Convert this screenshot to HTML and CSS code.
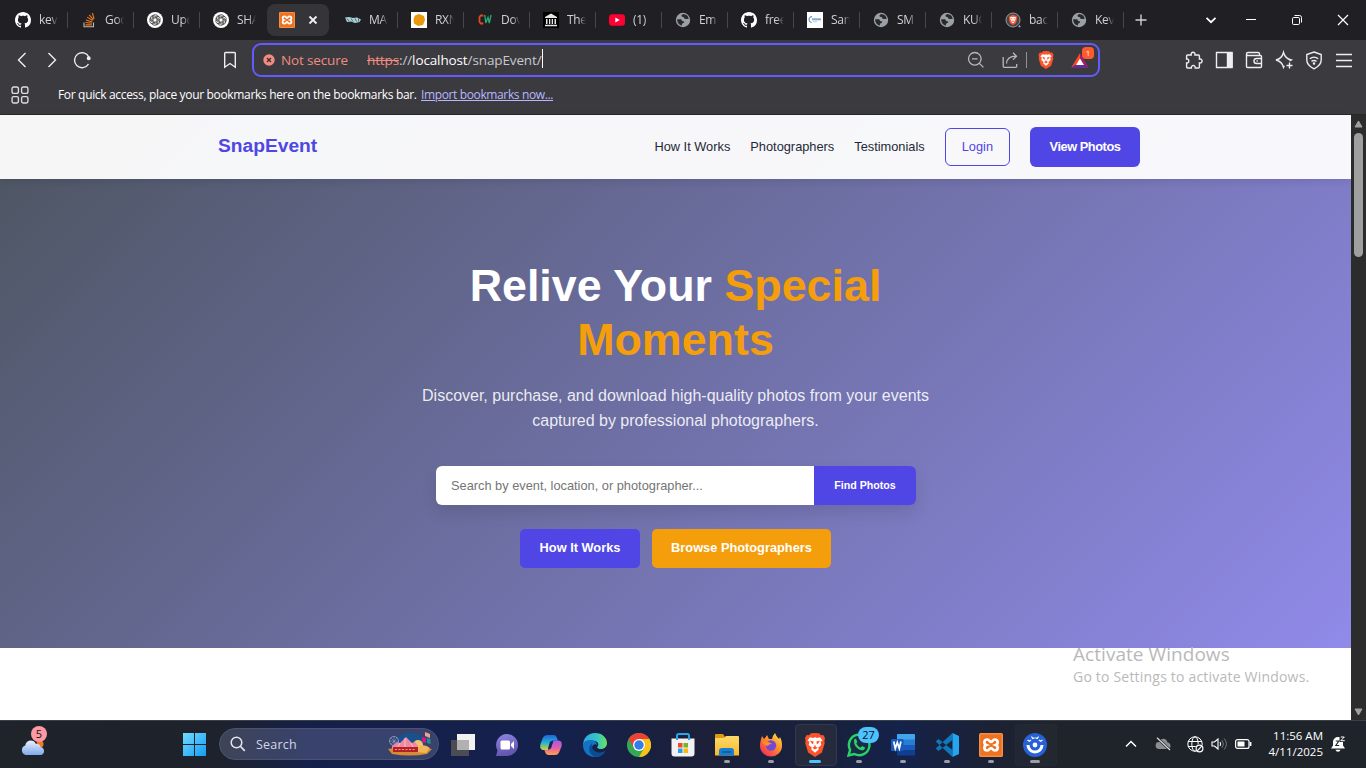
FILE: index.html
```
<!DOCTYPE html>
<html lang="en">
<head>
<meta charset="utf-8">
<title>SnapEvent</title>
<link rel="stylesheet" href="styles.css">
</head>
<body>
<svg class="defs" width="0" height="0">
  <defs>
    <symbol id="github" viewBox="0 0 16 16"><path fill="#fff" d="M8 0C3.58 0 0 3.58 0 8c0 3.54 2.29 6.53 5.47 7.59.4.07.55-.17.55-.38 0-.19-.01-.82-.01-1.49-2.01.37-2.53-.49-2.69-.94-.09-.23-.48-.94-.82-1.13-.28-.15-.68-.52-.01-.53.63-.01 1.08.58 1.23.82.72 1.21 1.87.87 2.33.66.07-.52.28-.87.51-1.07-1.78-.2-3.64-.89-3.64-3.95 0-.87.31-1.59.82-2.15-.08-.2-.36-1.02.08-2.12 0 0 .67-.21 2.2.82.64-.18 1.32-.27 2-.27s1.36.09 2 .27c1.53-1.04 2.2-.82 2.2-.82.44 1.1.16 1.92.08 2.12.51.56.82 1.27.82 2.15 0 3.07-1.87 3.75-3.65 3.95.29.25.54.73.54 1.48 0 1.07-.01 1.93-.01 2.2 0 .21.15.46.55.38A8.01 8.01 0 0 0 16 8c0-4.42-3.58-8-8-8z"/></symbol>
    <symbol id="stack" viewBox="0 0 16 16"><path d="M3 10.500v4.300h9.500v-4.300" fill="none" stroke="#bcbbbb" stroke-width="1.100"/><path d="M4.500 12.900h6.300M4.500 10.500l6.400.8M5 7.900l6.200 2M6.200 5.100l5.500 3.400M8.200 2.800l4.200 4.800M11.400 1l1.700 5.800" stroke="#f47a1c" stroke-width="1.100" fill="none"/></symbol>
    <symbol id="gpt" viewBox="0 0 16 16"><circle cx="8" cy="8" r="8" fill="#fff"/><g fill="none" stroke="#222" stroke-width=".65"><path id="lobe" d="M6.100 8.800V5a2.400 2.400 0 0 1 4.500-1.100M6.100 5.700L9 4.100a2.300 2.300 0 0 1 3.200 1"/><use href="#lobe" transform="rotate(60 8 8)"/><use href="#lobe" transform="rotate(120 8 8)"/><use href="#lobe" transform="rotate(180 8 8)"/><use href="#lobe" transform="rotate(240 8 8)"/><use href="#lobe" transform="rotate(300 8 8)"/></g></symbol>
    <symbol id="xampp" viewBox="0 0 24 24"><rect width="24" height="24" rx="1.500" fill="#ee7220"/><rect x=".8" y=".8" width="22.400" height="22.400" rx="1" fill="none" stroke="#f9a866" stroke-width=".8"/><path d="M8.200 6.500C4.600 6.500 4.600 11 7.200 12c-2.600 1-2.600 5.500 1 5.500 2.500 0 2.200-2.500 3.800-2.500s1.300 2.500 3.800 2.500c3.600 0 3.600-4.500 1-5.500 2.600-1 2.600-5.500-1-5.500-2.500 0-2.200 2.500-3.800 2.500s-1.300-2.500-3.800-2.500z" fill="none" stroke="#fff" stroke-width="2.700"/></symbol>
    <symbol id="hands" viewBox="0 0 16 16"><path d="M0 5.500l4-.5 4 1 4-.5 4 2-1.500 2.500-4.500 1-4-1.500-4 .5z" fill="#a9d1dc"/><path d="M2 6.500l2 2.500M6 6.500l2 3M10 6.500l1.500 3M13.500 6.500v3" stroke="#4b5b66" stroke-width=".9"/></symbol>
    <symbol id="hexa" viewBox="0 0 16 16"><path d="M0 0h16v16H0z" fill="#fff"/><path d="M8 2l5 2 1 4-2 5-5 1-4-2.500L2.500 7 4 3.500z" fill="#e8980f"/></symbol>
    <symbol id="cw" viewBox="0 0 16 16"><path d="M6.300 3.500H3.800L2.500 5v5l1.300 1.500h2.500" fill="none" stroke="#e8441f" stroke-width="1.800"/><path d="M7.800 3l1 8L11 5.500l1.300 5.500L14 3" fill="none" stroke="#2bab75" stroke-width="1.300"/></symbol>
    <symbol id="museum" viewBox="0 0 16 16"><path d="M0 0h16v16H0z" fill="#000"/><path d="M2 5l6-3.500L14 5v1H2zM3 7h1.500v5H3zM6 7h1.300v5H6zM8.700 7H10v5H8.700zM11.500 7H13v5h-1.500zM2 12.700h12v1.600H2z" fill="#e7e7e7"/></symbol>
    <symbol id="youtube" viewBox="0 0 16 16"><rect y="2.300" width="16" height="11.500" rx="3" fill="#ff0033"/><path d="M6.300 5.500v5L10.700 8z" fill="#fff"/></symbol>
    <symbol id="globe" viewBox="0 0 16 16"><circle cx="8" cy="8" r="7.200" fill="#9aa0a6"/><path d="M2.200 7.200h3.100c2 0 1 2 3 2.100 1.400.1 1 1.900-.4 1.900-1 0-.9 1.300-.9 2.400-2.900-.6-5-3-4.800-6.400zM8.200 2.100c-1 1-2 .6-1.600 2.100.3 1.200 2.600.3 2.700 1.700.1 1.200 1.400 1.300 2.400 1.100l2-.3C13.300 4 11.100 2.200 8.200 2.100z" fill="#29292e"/></symbol>
    <symbol id="san" viewBox="0 0 16 16"><path d="M0 0h16v16H0z" fill="#fff"/><path d="M5 4.800C1.500 4 1 10 4.600 10.600" fill="none" stroke="#3c6da8"/><path d="M5 7.300h9" stroke="#83a9ce" stroke-width="2"/><path d="M6 9.700h4" stroke="#bdd0e2"/></symbol>
    <symbol id="brave" viewBox="0 0 24 24"><path d="M12 0l4 .2 2 2 2.300-.2L22 5l-.6 3 .3 2.200-2.800 9.300L12 24l-6.900-4.500L2.300 10.200 2.600 8 2 5l1.700-3L6 2.200l2-2z" fill="#fb542b"/><path d="M12 4.300l-2 .6-3-.7-2.500 3.200 2 1.300-.8 3.300 3 2.500-.4 2L12 19.800l3.700-3.300-.4-2 3-2.500-.8-3.300 2-1.300L17 4.200l-3 .7z" fill="#fff"/><path d="M7 7.500l3.500 1-.3 3-1.600-1.200zM17 7.500l-3.500 1 .3 3 1.600-1.200zM12 11.200l.8 2.600 1.900 1-2.700 1.800-2.700-1.800 1.900-1z" fill="#fb542b"/></symbol>
    <linearGradient id="gWin" x2="1" y2="1"><stop stop-color="#72dbff"/><stop offset="1" stop-color="#139cf4"/></linearGradient>
    <linearGradient id="gCloud" x2="0" y2="1"><stop stop-color="#e9f1ff"/><stop offset="1" stop-color="#7fa8ec"/></linearGradient>
    <linearGradient id="gChat" x2="0.300" y2="1"><stop stop-color="#8f86e3"/><stop offset="1" stop-color="#6355ae"/></linearGradient>
    <linearGradient id="gCoA" x2="0" y2="1"><stop stop-color="#1e63e0"/><stop offset=".5" stop-color="#21b3d4"/><stop offset="1" stop-color="#d9cf35"/></linearGradient>
    <linearGradient id="gCoB" x2="0" y2="1"><stop stop-color="#9c5cf0"/><stop offset=".5" stop-color="#e75da5"/><stop offset="1" stop-color="#ff9f50"/></linearGradient>
    <linearGradient id="gEdge" x2="1"><stop stop-color="#2ba7e8"/><stop offset=".6" stop-color="#36c7c4"/><stop offset="1" stop-color="#6fe05b"/></linearGradient>
    <linearGradient id="gFold" x2="0" y2="1"><stop stop-color="#ffd96b"/><stop offset="1" stop-color="#f5b92b"/></linearGradient>
    <linearGradient id="gFox" x1="1" y1="0" x2=".2" y2="1"><stop stop-color="#ffe94c"/><stop offset=".5" stop-color="#ff8a2a"/><stop offset="1" stop-color="#f02a5d"/></linearGradient>
  </defs>
</svg>

<header class="tabs">
  <div class="tab"><svg><use href="#github"/></svg><span>kev</span></div>
  <div class="tab"><svg><use href="#stack"/></svg><span>Goo</span></div>
  <div class="tab"><svg><use href="#gpt"/></svg><span>Upd</span></div>
  <div class="tab last"><svg><use href="#gpt"/></svg><span>SHA</span></div>
  <div class="tab active"><svg><use href="#xampp"/></svg><svg class="close" viewBox="0 0 10 10"><path d="M1.500 1.500l7 7m0-7l-7 7" stroke="#f1f1f3" stroke-width="1.800"/></svg></div>
  <div class="tab"><svg><use href="#hands"/></svg><span>MA</span></div>
  <div class="tab"><svg><use href="#hexa"/></svg><span>RXN</span></div>
  <div class="tab"><svg><use href="#cw"/></svg><span>Dov</span></div>
  <div class="tab"><svg><use href="#museum"/></svg><span>The</span></div>
  <div class="tab"><svg><use href="#youtube"/></svg><span>(1)</span></div>
  <div class="tab"><svg><use href="#globe"/></svg><span>Em</span></div>
  <div class="tab"><svg><use href="#github"/></svg><span>free</span></div>
  <div class="tab"><svg><use href="#san"/></svg><span>San</span></div>
  <div class="tab"><svg><use href="#globe"/></svg><span>SM</span></div>
  <div class="tab"><svg><use href="#globe"/></svg><span>KUC</span></div>
  <div class="tab"><svg viewBox="0 0 16 16"><circle cx="8" cy="8" r="7" fill="#46464b" stroke="#97989c"/><use href="#brave" x="3" y="3" width="10" height="10"/><circle cx="14.500" cy="14.300" r="1.500" fill="#a7a7ab" stroke="#202024"/></svg><span>bac</span></div>
  <div class="tab"><svg><use href="#globe"/></svg><span>Kev</span></div>
  <svg class="plus" viewBox="0 0 12 12"><path d="M6 .5v11M.5 6h11" stroke="#d0d0d3" stroke-width="1.400"/></svg>
  <div class="winctl">
    <svg viewBox="0 0 12 12"><path d="M1.500 3.800L6 8.200l4.500-4.400" fill="none" stroke="#fff" stroke-width="1.700"/></svg>
    <svg viewBox="0 0 12 12"><path d="M1 5.500h10" stroke="#fff"/></svg>
    <svg viewBox="0 0 12 12"><rect x="1.500" y="3.500" width="7" height="7" rx="1.200" fill="none" stroke="#fff"/><path d="M3.500 1.500h5.200a2 2 0 0 1 1.800 2v5" fill="none" stroke="#fff"/></svg>
    <svg viewBox="0 0 12 12"><path d="M1 1l10 10M11 1L1 11" stroke="#fff" stroke-width="1.200"/></svg>
  </div>
</header>

<div class="toolbar">
  <svg viewBox="0 0 30 30"><path d="M18.500 8L11.500 15l7 7"/></svg>
  <svg viewBox="0 0 30 30"><path d="M11.500 8l7 7-7 7"/></svg>
  <svg viewBox="0 0 30 30"><path d="M21.500 19A7.500 7.500 0 1 1 21.800 12"/><circle cx="21.700" cy="13.200" r="1.300" fill="#eee"/></svg>
  <svg class="mark" viewBox="0 0 30 30"><path d="M10.500 7.500h9a.8.800 0 0 1 .8.800V22.200L15 18.500l-5.300 3.700V8.300a.8.800 0 0 1 .8-.8z"/></svg>
  <div class="url">
    <svg class="warn" viewBox="0 0 12 12"><circle cx="6" cy="6" r="5.700" fill="#f28b82"/><path d="M4 4l4 4m0-4L4 8" stroke="#3a2b2e" stroke-width="1.300"/></svg>
    <span class="insecure">Not secure</span>
    <span class="address"><s>https</s>://<b>localhost</b>/snapEvent/</span><i class="caret"></i>
    <div class="urlicons">
      <svg class="zoomout" viewBox="0 0 18 18"><circle cx="7.800" cy="7.800" r="6.300"/><path d="M12.400 12.400l4 4M5 7.800h5.600"/></svg>
      <svg class="share" viewBox="0 0 18 18"><path d="M2.200 6v9.300a1 1 0 0 0 1 1h11.500a1 1 0 0 0 1-1V13M5.500 12.500c.3-4.500 3-7.300 9.500-7.300M12 1.800l3.500 3.400L12 8.600"/></svg>
      <i class="rule"></i>
      <svg class="shield"><use href="#brave"/></svg>
      <span class="bat"><svg viewBox="0 0 18 15"><path d="M9 0L0 15l9-6z" fill="#ff4724"/><path d="M9 0l9 15-9-6z" fill="#9e1f63"/><path d="M0 15h18L9 9z" fill="#662d91"/><path d="M9 5.500l4 6.500H5z" fill="#fff"/></svg><em>1</em></span>
    </div>
  </div>
  <div class="tools">
    <svg viewBox="0 0 30 30"><path d="M8.500 10h3.700c-.9-3.600 4.600-3.600 3.800 0h3.500a.9.900 0 0 1 .9.900v3.200c3.600-.8 3.600 4.600 0 3.800v4.200a.9.900 0 0 1-.9.900h-3.300c.6-3.300-4.400-3.300-3.800 0H8.500a.9.900 0 0 1-.9-.9v-4.200c3 .6 3-4.400 0-3.800v-3.200a.9.900 0 0 1 .9-.9z"/></svg>
    <svg viewBox="0 0 30 30"><path d="M7.500 7.500h15.500v15h-15.500z"/><path d="M18.500 8h4.500v14h-4.500z" fill="#eee"/></svg>
    <svg viewBox="0 0 30 30"><path d="M20.500 10.500V9a1.500 1.500 0 0 0-1.500-1.500H9a1.500 1.500 0 0 0 0 3h12.500a1 1 0 0 1 1 1v10a1 1 0 0 1-1 1H8.500a1 1 0 0 1-1-1V9M22.500 13.500h-5a2.200 2.200 0 0 0 0 5h5M17.500 16h1.300"/></svg>
    <svg viewBox="0 0 30 30"><path d="M20.500 15.800l1.700-.8q-6-1.500-7.700-7.500-1.500 6-7.500 7.500 6 1.500 7.500 7.300l.8-1.600M20.500 17.500v6M17.500 20.500h6"/></svg>
    <svg viewBox="0 0 30 30"><path d="M15 7l7.200 2.600v5.400c0 4.500-3.500 7-7.200 8.800-3.700-1.800-7.200-4.300-7.200-8.800V9.600zM10.800 13.800c2.500-2 5.900-2 8.400 0M12.500 16.400c1.500-1.100 3.500-1.100 5 0"/><circle cx="15" cy="18.500" r=".6"/></svg>
    <svg viewBox="0 0 30 30"><path d="M7 9.500h16M7 15.500h16M7 21.500h16"/></svg>
  </div>
</div>

<div class="bookmarks">
  <svg viewBox="0 0 17 17"><rect x="1" y="1" width="6" height="6" rx="1.500"/><rect x="10" y="1" width="6" height="6" rx="1.500"/><rect x="1" y="10" width="6" height="6" rx="1.500"/><rect x="10" y="10" width="6" height="6" rx="1.500"/></svg>
  <span class="hint">For quick access, place your bookmarks here on the bookmarks bar.</span>
  <a>Import bookmarks now...</a>
</div>

<main class="viewport">
  <div class="page">
    <section class="hero">
      <nav class="nav">
        <div class="brand">SnapEvent</div>
        <div class="links">
          <a>How It Works</a><a>Photographers</a><a>Testimonials</a>
          <a class="login">Login</a><a class="view">View Photos</a>
        </div>
      </nav>
      <h1>Relive Your <span>Special Moments</span></h1>
      <p>Discover, purchase, and download high-quality photos from your events captured by professional photographers.</p>
      <form class="search"><input type="text" placeholder="Search by event, location, or photographer..."><button type="button">Find Photos</button></form>
      <div class="cta"><a>How It Works</a><a class="amber">Browse Photographers</a></div>
    </section>
  </div>
  <div class="scrollbar">
    <svg viewBox="0 0 9 8"><path d="M4.500 1L8 7H1z" fill="#9f9f9f" stroke="#9f9f9f" stroke-linejoin="round"/></svg>
    <i class="thumb"></i>
    <svg class="down" viewBox="0 0 9 8"><path d="M4.500 7L8 1H1z" fill="#9f9f9f" stroke="#9f9f9f" stroke-linejoin="round"/></svg>
  </div>
  <div class="watermark"><div class="w1">Activate Windows</div><div class="w2">Go to Settings to activate Windows.</div></div>
</main>

<footer class="taskbar">
  <div class="weather"><svg viewBox="0 0 25 22"><circle cx="20" cy="9" r="3.500" fill="#f47b1c"/><path d="M5.500 20a5 5 0 0 1-.3-9.500C6 5 13.500 3.500 16 9c3.500-.5 4.500 1.500 4.500 3 5 .5 4.500 8 0 8z" fill="url(#gCloud)"/></svg><em>5</em></div>
  <div class="start"><svg viewBox="0 0 23 23" fill="url(#gWin)"><path d="M0 0h11v11H0zM12 0h11v11H12zM0 12h11v11H0zM12 12h11v11H12z"/></svg></div>
  <div class="find">
    <svg class="lens" viewBox="0 0 16 16"><circle cx="6.500" cy="6.500" r="5.300" fill="none" stroke="#e4e6ee" stroke-width="1.500"/><path d="M10.500 10.500l4.300 4.300" stroke="#e4e6ee" stroke-width="1.700"/></svg>
    <span>Search</span>
    <svg class="fair" viewBox="0 0 46 26"><ellipse cx="23" cy="12" rx="14" ry="10" fill="#17528f"/><circle cx="7" cy="10" r="4.500" fill="none" stroke="#8aa2cc" stroke-width=".8"/><path d="M7 5v10M2 10h10M3.500 6.500l7 7M10.500 6.500l-7 7M5 18l2-8 2 8" stroke="#8aa2cc" stroke-width=".5"/><path d="M1 18q22-4 44 0l-5 5q-17 3-35 0z" fill="#d98b34"/><circle cx="31" cy="14" r="5" fill="#f5c46e"/><path d="M28 21q6-11 15-4l-4 5z" fill="#f0b65a"/><path d="M5 15l5-4 3 1 6-6 6 6 3-1 3 4v3H5z" fill="#ef86a2"/><path d="M18 7v9M13 12l-2 4M24 12l2 4" stroke="#ffd1d1" stroke-width=".8"/><path d="M6 16h25v5H6z" fill="#b3222a"/><path d="M8 18.500h21" stroke="#ffc468" stroke-dasharray="2 1.500" stroke-width=".8"/><path d="M38 1l5 2v4l-5-2z" fill="#f0a28b"/><path d="M35 6l4 1v5l-4-1z" fill="#d11c86"/><path d="M40 7l3.500 1v5L40 12z" fill="#218f8b"/></svg>
  </div>
  <div class="apps">
    <div><svg viewBox="0 0 24 24"><rect x="6" y="1" width="18" height="16" fill="#f1f1f1"/><path d="M0 7h18v16H0z" fill="#555" opacity=".85"/><path d="M6 7h12v10H6z" fill="#b1b1b1"/></svg></div>
    <div><svg viewBox="0 0 24 24"><path d="M12 1a11 11 0 1 1 0 22L1 23l1.500-5.500A11 11 0 0 1 12 1z" fill="url(#gChat)"/><rect x="5.500" y="7.500" width="9.500" height="9" rx="1.500" fill="#fff"/><path d="M16 11l3-3v8l-3-3z" fill="#fff"/></svg></div>
    <div><svg viewBox="0 0 24 24"><path d="M8 2h7q2 0 3 3l.7 2.500H14q-2 0-3 3l-2 6.500H5C2 17 .5 15 1.500 11L4 4.500Q5 2 8 2z" fill="url(#gCoA)"/><path d="M16 22H9q-2 0-3-3l-.5-2H9q2 0 3-3l2.500-6.500H19c3 0 4.500 2 3.500 6L20 19.500Q19 22 16 22z" fill="url(#gCoB)"/><path d="M11 8.500h3l-2 7H9z" fill="#15275a"/></svg></div>
    <div><svg viewBox="0 0 24 24"><path d="M0 13C0 5 5 0 12 0c7.500 0 12 5 12 10 0 7-9 7.500-10 4 2-1 2-5-2-6-6-1-11 1-12 5z" fill="url(#gEdge)"/><path d="M0 12c1-7 14-6 14 0-2-2-5 0-5 3 0 6 8 7 13 3-2 4-6 6-10 6C5 24 0 19 0 12z" fill="#1474c4"/><path d="M9 10c-5 4-3 13 4 14 5-.3 8-3 9-6-6 4-15 0-13-8z" fill="#0c4c94"/></svg></div>
    <div><svg viewBox="0 0 24 24"><circle cx="12" cy="12" r="12" fill="#34a853"/><path d="M12 12L1.600 6A12 12 0 0 1 22.400 6H12z" fill="#ea4335"/><path d="M12 6h10.400A12 12 0 0 1 12 24l5.200-9z" fill="#fbc116"/><path d="M1.600 6l5.200 9L12 12V6z" fill="#ea4335"/><circle cx="12" cy="12" r="6" fill="#fff"/><circle cx="12" cy="12" r="4.700" fill="#347de8"/></svg></div>
    <div><svg viewBox="0 0 24 24"><path d="M.5 5.500h23v15a3 3 0 0 1-3 3h-17a3 3 0 0 1-3-3z" fill="#f2f2f4"/><path d="M6 7V2.500Q6 1 7.500 1h9Q18 1 18 2.500V7" fill="none" stroke="#29a5e9" stroke-width="2"/><path d="M7 10h4.500v4.500H7z" fill="#ef4a2b"/><path d="M12.500 10H17v4.500h-4.500z" fill="#7bb51c"/><path d="M7 15.500h4.500V20H7z" fill="#22a2ed"/><path d="M12.500 15.500H17V20h-4.500z" fill="#fbb90e"/></svg></div>
    <div><svg viewBox="0 0 24 24"><path d="M0 2q0-1 1-1h7l2 3h13q1 0 1 1v6H0z" fill="#dc9b13"/><path d="M0 6q0-1 1-1h8l2-2h12q1 0 1 1v18.500H0z" fill="url(#gFold)"/><path d="M4 22.500V18q0-3 3-3h9q3 0 3 3v4.500z" fill="#167fd4"/><path d="M7 19h9" stroke="#0b5998" stroke-width="1.500"/></svg><i></i></div>
    <div><svg viewBox="0 0 24 24"><path d="M3 3l2 3q2-2 3-4l2 4h3q1-4 3-6 1 3 4 6l1-2c2 4 2 6 2 9a11 10.500 0 0 1-22 0C1 9 2 6 3 3z" fill="url(#gFox)"/><circle cx="12" cy="12.500" r="5.200" fill="#7749d3"/><path d="M3 9q5-2 10 2-3-.5-4 2-3 0-6-4z" fill="#ff8c27"/></svg><i></i></div>
    <div class="current"><svg><use href="#brave"/></svg><i></i></div>
    <div><svg viewBox="0 0 24 24"><path d="M1.500 22.500l1.600-5.700A10.300 10.300 0 1 1 7.300 21z" fill="#1c2a48" stroke="#27d366" stroke-width="2.400"/><path d="M7.200 6.500c1-1.200 2-.5 2.300.5l.8 1.900-1 1.500c1 2 2.400 3.300 4.500 4.200l1.400-1.500 2.800 1.400c0 2-1.500 3-3.500 2.800C10 16.500 6 11.500 7.200 6.500z" fill="#27d366"/></svg><em>27</em><i></i></div>
    <div><svg viewBox="0 0 24 24"><path d="M6 1h17q1 0 1 1v5H6z" fill="#41a5ee"/><path d="M6 6.500h18V12H6z" fill="#2b7cd3"/><path d="M6 12h18v5.500H6z" fill="#185abd"/><path d="M6 17h18v4.500q0 1-1 1H6z" fill="#103f91"/><rect y="6" width="12.500" height="12" rx="1" fill="#185abd"/><path d="M2.700 8.500l1.600 7 2-6 2 6 1.600-7" fill="none" stroke="#fff" stroke-width="1.700"/></svg><i></i></div>
    <div><svg viewBox="0 0 24 24"><path d="M17.500 0v7L3.500 18l-2.800-2.500zM17.500 24v-7L3.500 6 .7 8.500z" fill="#1177bb"/><path d="M17.500 0L24 3v18l-6.500 3z" fill="#25a5ee"/></svg><i></i></div>
    <div><svg><use href="#xampp"/></svg><i></i></div>
    <div class="open"><svg viewBox="0 0 24 24"><circle cx="12" cy="12" r="12" fill="#2861d6"/><path d="M5 12a7 7 0 0 0 14 0" fill="none" stroke="#fff" stroke-width="3"/><circle cx="12" cy="12" r="2.400" fill="#fff"/><path d="M4.500 7l1.800 1.300L8 7M8.500 3.500l1.200 2 2-.8M15.500 3.500l-1.200 2-2-.8M19.500 7l-1.800 1.300L16 7" fill="none" stroke="#fff" stroke-width="1.200"/></svg><i></i></div>
  </div>
  <div class="tray">
    <svg class="t1" viewBox="0 0 12 12"><path d="M1 8.500l5-5 5 5" fill="none" stroke="#fff" stroke-width="1.500"/></svg>
    <svg class="t2" viewBox="0 0 16 14"><path d="M4 12a3.500 3.500 0 0 1 .2-7C6 0 12 1 12.500 5.500c4 .3 4 6.500 0 6.500z" fill="#8c8e91"/><path d="M2 .8L15 13" stroke="#1f232a" stroke-width="2.500"/><path d="M2 .8L15 13" stroke="#ddd" stroke-width="1.200"/></svg>
    <svg class="t3" viewBox="0 0 17 17"><g fill="none" stroke="#fff"><circle cx="8" cy="8" r="7.200"/><ellipse cx="8" cy="8" rx="3.200" ry="7.200"/><path d="M1 5.500h14M1 10.500h9"/></g><circle cx="12.500" cy="12.500" r="4.400" fill="#1f242b"/><circle cx="12.500" cy="12.500" r="3.400" fill="none" stroke="#fff" stroke-width="1.200"/><path d="M10.200 14.800l4.600-4.600" stroke="#fff" stroke-width="1.200"/></svg>
    <svg class="t4" viewBox="0 0 17 14"><path d="M1 5v4h2.500L7 12V2L3.500 5z" fill="none" stroke="#fff" stroke-width="1.100"/><path d="M9 5q1.400 2 0 4" fill="none" stroke="#fff" stroke-width="1.100"/><path d="M11 3.200q3 3.800 0 7.600M13.200 1.500q4.500 5.500 0 11" fill="none" stroke="#71757a"/></svg>
    <svg class="t5" viewBox="0 0 17 10"><rect x=".6" y=".6" width="13.400" height="8.800" rx="2" fill="none" stroke="#fff" stroke-width="1.200"/><rect x="2.500" y="2.400" width="7" height="5.200" rx=".5" fill="#fff"/><path d="M15.500 3v4" stroke="#fff" stroke-width="1.800"/></svg>
    <div class="clock"><div>11:56 AM</div><div>4/11/2025</div></div>
    <svg class="t6" viewBox="0 0 15 16"><path d="M0 12.500L2 9.500V6a5 5 0 0 1 5-5h1.500V6H12v3.500l2 3z" fill="#fff"/><path d="M4.500 13.800h5q-.5 2-2.500 2t-2.500-2z" fill="#fff"/><path d="M4.800 5h3l-3 4.500h3.400" fill="none" stroke="#1f242b" stroke-width="1.100"/><path d="M9.800 1h3.500L9.800 4.700h4" fill="none" stroke="#fff"/></svg>
  </div>
</footer>
</body>
</html>
```
FILE: styles.css
```
* { box-sizing: border-box; }
body {
  margin: 0; width: 1366px; height: 768px; overflow: hidden;
  display: flex; flex-direction: column;
  font-family: "Open Sans", "Noto Sans", sans-serif; background: #3b3a3f;
}
svg { display: block; flex: none; }
.defs { position: absolute; }
em { font-style: normal; }

/* tab strip */
.tabs { height: 40px; flex: none; background: #202024; display: flex; align-items: center; padding-left: 2px; }
.tab { width: 66px; height: 16px; flex: none; display: flex; align-items: center; padding-left: 13px; gap: 8px; border-right: 1px solid #46464b; }
.tab.last { border-color: transparent; }
.tab svg { width: 16px; height: 16px; }
.tab span {
  width: 19px; overflow: hidden; white-space: nowrap; font-size: 12px; line-height: 16px; color: #d2d2d5;
  letter-spacing: -0.3px;
  -webkit-mask-image: linear-gradient(90deg, #000 60%, transparent); mask-image: linear-gradient(90deg, #000 60%, transparent);
}
.tab.active { width: 62px; height: 32px; margin: 0 3px 0 1px; padding-left: 12px; gap: 13px; border: 0; border-radius: 8px; background: #353539; }
.tab .close { width: 10px; height: 10px; }
.plus { width: 12px; height: 12px; margin-left: 11px; }
.winctl { display: flex; margin-left: auto; padding-right: 17px; gap: 34px; }
.winctl svg { width: 12px; height: 12px; }
.winctl svg:first-child { margin-right: -6px; }

/* toolbar */
.toolbar { height: 40px; flex: none; display: flex; align-items: center; padding: 0 7px; }
.toolbar > svg, .tools svg { width: 30px; height: 30px; fill: none; stroke: #eee; stroke-width: 1.4; }
.toolbar .mark { margin-left: 118px; }
.tools { display: flex; margin-left: auto; }
.url {
  width: 848px; height: 34px; margin-left: 7px; border: 2px solid #635bff; border-radius: 9px;
  display: flex; align-items: center; padding-left: 9px; line-height: 20px; color: #c9c9cd;
}
.warn { width: 12px; height: 12px; }
.insecure { margin-left: 6px; width: 86px; color: #f28b82; font-size: 13.5px; letter-spacing: -0.15px; white-space: nowrap; }
.address { font-size: 13.5px; letter-spacing: -0.12px; white-space: nowrap; }
.address s { color: #f28b82; }
.address b { font-weight: 400; color: #fff; }
.caret { width: 1px; height: 19px; background: #fff; margin-top: -3px; }
.urlicons { display: flex; align-items: center; margin-left: auto; padding-right: 7px; height: 30px; }
.urlicons svg { fill: none; }
.zoomout, .share { width: 18px; height: 18px; stroke: #b9b9bd; stroke-width: 1.3; }
.share { margin-left: 16px; }
.rule { width: 1px; height: 16px; background: #8f8f94; margin: 0 10px 0 7px; }
.shield { width: 18px; height: 18px; }
.bat { position: relative; margin-left: 16px; width: 20px; height: 15px; }
.bat svg { width: 18px; height: 15px; }
.bat em {
  position: absolute; left: 11px; top: -6px; width: 12px; height: 12px; border-radius: 4px;
  background: #ff5a2c; color: #fff; font-size: 8px; line-height: 12px; text-align: center;
}

/* bookmarks bar */
.bookmarks { height: 35px; flex: none; display: flex; align-items: center; padding: 0 0 5px 11px; border-bottom: 1px solid #29292c; font-size: 12px; color: #fff; white-space: nowrap; }
.bookmarks svg { width: 18px; height: 18px; fill: none; stroke: #ddd; stroke-width: 1.3; }
.hint { margin-left: 29px; width: 363px; letter-spacing: -0.33px; }
.bookmarks a { color: #b6b7ff; text-decoration: underline; letter-spacing: -0.37px; }

/* web page */
.viewport { height: 605px; flex: none; display: flex; position: relative; background: #fff; }
.page { width: 1351px; font-family: Arial, "Liberation Sans", sans-serif; }
.hero {
  height: 533px; display: flex; flex-direction: column; align-items: center; text-align: center;
  background: linear-gradient(135deg, #4c5560 0%, #908ae9 100%);
}
.nav {
  width: 100%; height: 64px; flex: none; padding: 0 211px 0 218px;
  display: flex; align-items: center; justify-content: space-between;
  background: rgba(255, 255, 255, .95); box-shadow: 0 2px 8px rgba(0, 0, 0, .1);
}
.brand { font-size: 19.2px; font-weight: 700; color: #4f46e5; margin-top: -3px; }
.links { display: flex; align-items: center; gap: 20px; font-size: 12.8px; color: #1f2937; }
.links a { position: relative; }
.links a:nth-child(-n+3) { margin-top: -2px; }
.login { height: 38px; line-height: 36px; padding: 0 16px; border: 1px solid #4f46e5; border-radius: 6px; color: #4f46e5; }
.view { height: 40px; line-height: 39px; width: 110px; border-radius: 6px; background: #4f46e5; color: #fff; font-weight: 700; letter-spacing: -0.45px; }
h1 { width: 512px; margin: 80px 0 0; font-size: 44.8px; line-height: 53.76px; color: #fff; }
h1 span { color: #f59e0b; }
.hero p { width: 512px; margin: 16px 0 0; font-size: 16px; line-height: 25.6px; color: rgba(255, 255, 255, .88); }
.search { display: flex; width: 480px; height: 39px; margin: 32px 0 0 1px; border-radius: 6px; overflow: hidden; box-shadow: 0 8px 16px rgba(0, 0, 0, .1); flex: none; }
.search input { flex: 1; min-width: 0; border: 0; padding: 0 15px; font: 12.8px Arial, "Liberation Sans", sans-serif; background: #fff; }
.search button { width: 102px; border: 0; padding: 0; font: 700 10.67px Arial, "Liberation Sans", sans-serif; color: #fff; background: #4f46e5; }
.cta { display: flex; gap: 12px; margin-top: 24px; }
.cta a { width: 120px; height: 39px; line-height: 38px; border-radius: 5px; background: #4f46e5; color: #fff; font-size: 12.8px; font-weight: 700; }
.cta .amber { width: 179px; background: #f59e0b; }

.scrollbar { width: 15px; background: #2c2c2c; display: flex; flex-direction: column; align-items: center; padding: 5px 0 4px; }
.scrollbar svg { width: 9px; height: 8px; }
.thumb { width: 9px; height: 124px; margin-top: 5px; border-radius: 5px; background: #9f9f9f; }
.down { margin-top: auto; }
.watermark { position: absolute; left: 1073px; top: 525px; color: #b9b9b9; white-space: nowrap; }
.w1 { font-size: 19px; line-height: 28px; letter-spacing: 0.05px; }
.w2 { font-size: 14px; line-height: 18px; letter-spacing: 0.2px; }

/* taskbar */
.taskbar {
  height: 48px; flex: none; display: flex; align-items: center; border-top: 1px solid #39404a; color: #fff;
  background: linear-gradient(90deg, #1f232a 0, #1d222c 220px, #15204a 310px, #14214c 560px, #1c2038 700px, #17213f 840px, #15224a 900px, #1c2233 1000px, #1f242b 1060px);
}
.weather { position: relative; width: 25px; height: 22px; margin: 2px 0 0 20px; }
.weather svg { width: 25px; height: 22px; }
.weather em { position: absolute; left: 11px; top: -9px; width: 16px; height: 16px; border-radius: 8px; background: #ff99a4; color: #111; font-size: 11px; line-height: 16px; text-align: center; }
.start { margin-left: 138px; }
.start svg { width: 23px; height: 23px; }
.find { width: 220px; height: 32px; margin: -1px 0 0 13px; border: 1px solid #4b5370; border-radius: 16px; background: rgba(130, 140, 185, .32); display: flex; align-items: center; padding: 0 5px 0 10px; }
.lens { width: 16px; height: 16px; }
.find span { margin-left: 10px; font-size: 12.5px; color: #d4d7e2; letter-spacing: 0.2px; }
.fair { width: 46px; height: 26px; margin-left: auto; }
.apps { display: flex; margin-left: 2px; }
.apps div { position: relative; width: 44px; height: 47px; display: flex; align-items: center; justify-content: center; }
.apps svg { width: 24px; height: 24px; position: relative; }
.apps i { position: absolute; left: 19px; bottom: 5px; width: 6px; height: 3px; border-radius: 2px; background: #9b9da4; }
.apps .current::before, .apps .open::before { content: ""; position: absolute; left: 2px; top: 3px; width: 40px; height: 40px; border: 1px solid #34384a; border-radius: 4px; background: #262a3d; }
.apps .open::before { background: rgba(255, 255, 255, .02); border-color: rgba(255, 255, 255, .02); }
.apps .current i { left: 16px; width: 12px; background: #4cc2ff; }
.apps .open i { left: 17px; width: 10px; }
.apps em { position: absolute; left: 21px; top: 6px; width: 21px; height: 16px; border-radius: 8px; background: #4cc2ff; color: #111; font-size: 11px; line-height: 16px; text-align: center; }
.tray { display: flex; align-items: center; margin: -1px 0 0 auto; padding-right: 20px; }
.t1 { width: 12px; height: 12px; margin-right: 18px; }
.t2 { width: 16px; height: 14px; margin-right: 16px; }
.t3 { width: 17px; height: 17px; margin-right: 7px; }
.t4 { width: 17px; height: 14px; margin-right: 7px; }
.t5 { width: 17px; height: 10px; }
.clock { width: 71px; text-align: right; font-size: 11.5px; line-height: 16px; white-space: nowrap; }
.t6 { width: 15px; height: 16px; margin-left: 8px; }
```
